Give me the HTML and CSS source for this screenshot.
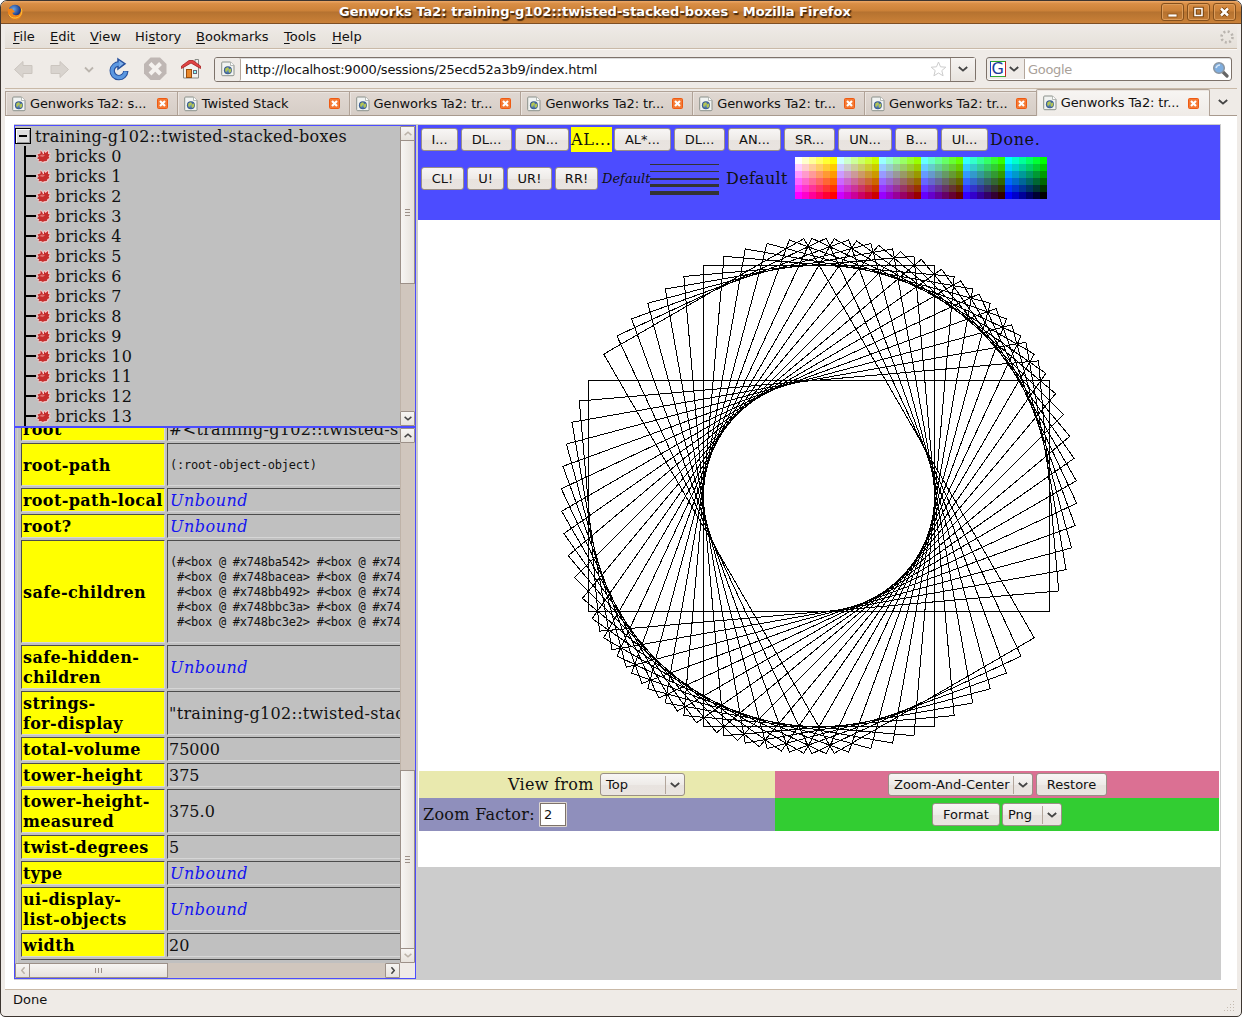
FILE: index.html
```
<!DOCTYPE html>
<html lang="en">
<head>
<meta charset="utf-8">
<title>Genworks Ta2: training-g102::twisted-stacked-boxes - Mozilla Firefox</title>
<link rel="stylesheet" href="styles.css">
</head>
<body>
<svg class="defs" aria-hidden="true">
  <defs>
    <linearGradient id="gBlue" x1="0" y1="0" x2="0" y2="1"><stop offset="0" stop-color="#7fb0ea"/><stop offset="1" stop-color="#3f7cd4"/></linearGradient>
    <radialGradient id="gGlobe"><stop offset="0" stop-color="#6a9ccc"/><stop offset="1" stop-color="#35568c"/></radialGradient>
    <radialGradient id="gFox" cx=".4" cy=".3"><stop offset="0" stop-color="#6aa6e8"/><stop offset="1" stop-color="#16307c"/></radialGradient>
    <symbol id="page" viewBox="0 0 14 16">
      <path d="M1.700 1h7.800L13 4.500v9.200q0 1-1 1H1.700q-1 0-1-1V2q0-1 1-1z" fill="#f1f3f1" stroke="#8b908b"/>
      <path d="M9.500 1v3.500H13" fill="#fff" stroke="#a5aaa5" stroke-width=".8"/>
      <circle cx="6.900" cy="9.300" r="4" fill="url(#gGlobe)"/>
      <path d="M4.300 7.500l2-1.300 1.700.8-.6 1.700-1.600 1.300-.6 1.600-1-1.600zM7.600 8.500l2.400-1 .4 2.400-1.500 2-1.300-1z" fill="#b4c552"/>
    </symbol>
    <symbol id="close" viewBox="0 0 11 11">
      <rect x=".5" y=".5" width="10" height="10" rx="1" fill="#f47a35" stroke="#ee5a12"/>
      <path d="M3 3l5 5M8 3l-5 5" stroke="#fff" stroke-width="2.200"/>
    </symbol>
    <symbol id="chev" viewBox="0 0 10 6"><path d="M.8 1L5 4.600 9.200 1" fill="none" stroke="currentColor" stroke-width="1.900"/></symbol>
    <symbol id="leaf" viewBox="0 0 15 15">
      <path d="M1 5l3-.5V1l2 1 1 2.500L8.500 1l1.500 2 2.500-2v3l2 .5-1 2.500 1 2-2 1.500-1 2-2.500.3-1 1.200-2.500-1.300-3 .3.700-2L.5 9.500 2 7.500z" fill="#f3cfcf" stroke="#eec9c9" stroke-width=".9"/>
      <path d="M1.500 5.500L4.500 4.500V1.500L6 3l1 2h1V2.300L9.500 4l2.500-2v3l1.700.3L12.500 7.500l1 1.500-2 1-.8 2-2.700.2-1 .8-2-1-2.500.3.700-2L1 9.300 2.800 7.500z" fill="#c52c2c"/>
      <path d="M3 7l3-1.500 3 .4L7 8z" fill="#e07070"/>
    </symbol>
    <rect id="brick" x="-230.500" y="-115.500" width="461" height="231"/>
  </defs>
</svg>

<div class="window">
  <header class="titlebar">
    <svg class="fox" width="16" height="16" viewBox="0 0 16 16">
      <circle cx="8" cy="8" r="7.200" fill="url(#gFox)"/>
      <path d="M1.200 3.500Q.2 7 .9 9.600C2 13.600 5 15.700 8.400 15.600c4.400-.1 7.200-3.700 7.100-7.600 0-3-1.300-4.800-2.700-5.900 1.300 2.400 1.300 4 .8 5.700-.8 3-3.500 4.100-5.800 3.300-1.700-.6-2.400-1.700-2.200-2.700 1 .4 2 0 2.700-.6-1.400-.5-1.700-1-1.700-1.800L5 4.700c-1-.4-1.700-.2-2.300.2z" fill="#f08419"/>
      <path d="M14.300 4.500c1.600 4.500-1 9-5.800 9.500-3 .3-5.400-1-6.500-3.500" fill="none" stroke="#fbc53c" stroke-width="1"/>
    </svg>
    <h1>Genworks Ta2: training-g102::twisted-stacked-boxes - Mozilla Firefox</h1>
    <div class="winbtns">
      <span><svg width="22" height="16" viewBox="0 0 22 16"><rect x="6" y="10" width="9" height="3" fill="#fff" stroke="#8b4f14" stroke-width=".8"/></svg></span>
      <span><svg width="22" height="16" viewBox="0 0 22 16"><path d="M7 4.500h7v7H7z" fill="none" stroke="#7a430c" stroke-width="3.600"/><path d="M7 4.500h7v7H7z" fill="none" stroke="#fff" stroke-width="1.500"/></svg></span>
      <span><svg width="22" height="16" viewBox="0 0 22 16"><path d="M7 4.500l7 7M14 4.500l-7 7" stroke="#7a430c" stroke-width="4.500"/><path d="M7 4.500l7 7M14 4.500l-7 7" stroke="#fff" stroke-width="2.500"/></svg></span>
    </div>
  </header>

  <nav class="menubar">
    <span class="m1"><u>F</u>ile</span><span class="m2"><u>E</u>dit</span><span class="m3"><u>V</u>iew</span><span class="m4">Hi<u>s</u>tory</span><span class="m5"><u>B</u>ookmarks</span><span class="m6"><u>T</u>ools</span><span class="m7"><u>H</u>elp</span>
    <svg class="throbber" width="14" height="14" viewBox="0 0 14 14"><circle cx="7" cy="7" r="5.500" fill="none" stroke="#b9b4ae" stroke-width="2.600" stroke-dasharray="2 2.320"/></svg>
  </nav>

  <div class="toolbar">
    <svg class="tools" width="206" height="38" viewBox="0 0 206 38">
      <g fill="#d8d3ce" stroke="#cbc5bf">
        <path d="M9.500 19.500l8.500-8v4h9v8h-9v4z"/>
        <path d="M63.500 19.500L55 11.500v4h-9v8h9v4z"/>
      </g>
      <path d="M80 17.500l4 4 4-4" fill="none" stroke="#bbb5ae" stroke-width="1.800"/>
      <g fill="none">
        <path d="M114.500 14A6.800 6.800 0 1 0 120.800 21" stroke="#27509c" stroke-width="5.400"/>
        <path d="M113 9l7 4.700-7 5.300z" fill="#7fb0ea" stroke="#27509c" stroke-width="1.500"/>
        <path d="M114.500 14A6.800 6.800 0 1 0 120.600 21.500" stroke="#5b97e0" stroke-width="3.400"/>
      </g>
      <path d="M145.500 7.500h9.500l6.500 6.500v9.500l-6.500 6.500h-9.500l-6.500-6.500V14z" fill="#bfb7b4"/>
      <path d="M145 13.500l10.500 10.500M155.500 13.500L145 24" stroke="#f4f1ee" stroke-width="4"/>
      <path d="M178.500 17v11h15V17L186 12z" fill="#f2f1ee" stroke="#888a85"/>
      <path d="M190 14V9.500h3.500V16" fill="#eee" stroke="#888a85"/>
      <path d="M176.500 18.500l9.500-5.500 9.500 5.500v-2.500L188 10.500h-4l-7.500 5.500z" fill="#e04444" stroke="#a81f1f" stroke-width=".8"/>
      <rect x="181.500" y="19.500" width="5" height="8" fill="#e9882b" stroke="#9b4d0c"/>
      <rect x="188.500" y="20.500" width="3" height="3" fill="#8ff" stroke="#667"/>
    </svg>
    <div class="urlbar">
      <div class="favbox"><svg width="14" height="16"><use href="#page"/></svg></div>
      <span class="url">http://localhost:9000/sessions/25ecd52a3b9/index.html</span>
      <svg class="star" width="17" height="16" viewBox="0 0 17 16"><path d="M8.500 1l2 4.800 5.300.4-4 3.400 1.300 5.200-4.600-2.800-4.600 2.800 1.300-5.200-4-3.400 5.300-.4z" fill="#fff" stroke="#ccc"/></svg>
      <div class="drop"><svg width="10" height="6"><use href="#chev"/></svg></div>
    </div>
    <div class="search">
      <div class="engine">
        <span class="glogo">G</span>
        <svg width="10" height="6"><use href="#chev"/></svg>
      </div>
      <span class="hint">Google</span>
      <svg class="glass" width="17" height="17" viewBox="0 0 17 17"><path d="M10.500 10.500l4.500 4.500" stroke="#666" stroke-width="3.200" stroke-linecap="round"/><circle cx="7" cy="7" r="5.300" fill="#7faee0" stroke="#8b95a0" stroke-width="1.500"/><path d="M4 7q1-3 4-3" stroke="#d4e6f8" stroke-width="1.500" fill="none"/></svg>
    </div>
  </div>

  <div class="tabs">
    <div class="tab"><svg class="fav" width="14" height="16"><use href="#page"/></svg><span>Genworks Ta2: s...</span><svg class="x" width="11" height="11"><use href="#close"/></svg></div>
    <div class="tab"><svg class="fav" width="14" height="16"><use href="#page"/></svg><span>Twisted Stack</span><svg class="x" width="11" height="11"><use href="#close"/></svg></div>
    <div class="tab"><svg class="fav" width="14" height="16"><use href="#page"/></svg><span>Genworks Ta2: tr...</span><svg class="x" width="11" height="11"><use href="#close"/></svg></div>
    <div class="tab"><svg class="fav" width="14" height="16"><use href="#page"/></svg><span>Genworks Ta2: tr...</span><svg class="x" width="11" height="11"><use href="#close"/></svg></div>
    <div class="tab"><svg class="fav" width="14" height="16"><use href="#page"/></svg><span>Genworks Ta2: tr...</span><svg class="x" width="11" height="11"><use href="#close"/></svg></div>
    <div class="tab"><svg class="fav" width="14" height="16"><use href="#page"/></svg><span>Genworks Ta2: tr...</span><svg class="x" width="11" height="11"><use href="#close"/></svg></div>
    <div class="tab active"><svg class="fav" width="14" height="16"><use href="#page"/></svg><span>Genworks Ta2: tr...</span><svg class="x" width="11" height="11"><use href="#close"/></svg></div>
    <div class="tablist"><svg width="10" height="6"><use href="#chev"/></svg></div>
  </div>

  <main class="page">
    <div class="frames">
      <div class="left">
        <section class="treepane">
          <div class="tree">
            <div class="root"><span class="minus"></span><span class="name">training-g102::twisted-stacked-boxes</span></div>
            <ul>
              <li><svg width="15" height="15"><use href="#leaf"/></svg>bricks 0</li>
              <li><svg width="15" height="15"><use href="#leaf"/></svg>bricks 1</li>
              <li><svg width="15" height="15"><use href="#leaf"/></svg>bricks 2</li>
              <li><svg width="15" height="15"><use href="#leaf"/></svg>bricks 3</li>
              <li><svg width="15" height="15"><use href="#leaf"/></svg>bricks 4</li>
              <li><svg width="15" height="15"><use href="#leaf"/></svg>bricks 5</li>
              <li><svg width="15" height="15"><use href="#leaf"/></svg>bricks 6</li>
              <li><svg width="15" height="15"><use href="#leaf"/></svg>bricks 7</li>
              <li><svg width="15" height="15"><use href="#leaf"/></svg>bricks 8</li>
              <li><svg width="15" height="15"><use href="#leaf"/></svg>bricks 9</li>
              <li><svg width="15" height="15"><use href="#leaf"/></svg>bricks 10</li>
              <li><svg width="15" height="15"><use href="#leaf"/></svg>bricks 11</li>
              <li><svg width="15" height="15"><use href="#leaf"/></svg>bricks 12</li>
              <li><svg width="15" height="15"><use href="#leaf"/></svg>bricks 13</li>
            </ul>
          </div>
          <div class="vbar">
            <div class="sb off"><svg class="up" width="8" height="5"><use href="#chev"/></svg></div>
            <div class="thumb t1"><i></i></div>
            <div class="track"></div>
            <div class="sb"><svg width="8" height="5"><use href="#chev"/></svg></div>
          </div>
        </section>
        <section class="inspector">
          <div class="clip">
            <div class="slots">
              <b>root</b><div>#&lt;training-g102::twisted-stacked-boxes&gt;</div>
              <b>root-path</b><div><pre>(:root-object-object)</pre></div>
              <b>root-path-local</b><div><em>Unbound</em></div>
              <b>root?</b><div><em>Unbound</em></div>
              <b>safe-children</b><div><pre>(#&lt;box @ #x748ba542&gt; #&lt;box @ #x748ba8ea&gt;
 #&lt;box @ #x748bacea&gt; #&lt;box @ #x748bb092&gt;
 #&lt;box @ #x748bb492&gt; #&lt;box @ #x748bb83a&gt;
 #&lt;box @ #x748bbc3a&gt; #&lt;box @ #x748bbfe2&gt;
 #&lt;box @ #x748bc3e2&gt; #&lt;box @ #x748bc78a&gt;</pre></div>
              <b>safe-hidden-<br>children</b><div><em>Unbound</em></div>
              <b>strings-<br>for-display</b><div>"training-g102::twisted-stacked-boxes"</div>
              <b>total-volume</b><div class="num">75000</div>
              <b>tower-height</b><div class="num">375</div>
              <b>tower-height-<br>measured</b><div class="num">375.0</div>
              <b>twist-degrees</b><div class="num">5</div>
              <b>type</b><div><em>Unbound</em></div>
              <b>ui-display-<br>list-objects</b><div><em>Unbound</em></div>
              <b>width</b><div class="num">20</div>
            </div>
          </div>
          <div class="vbar">
            <div class="sb"><svg class="up" width="8" height="5"><use href="#chev"/></svg></div>
            <div class="track"></div>
            <div class="thumb t2"><i></i></div>
            <div class="sb off"><svg width="8" height="5"><use href="#chev"/></svg></div>
          </div>
          <div class="hbar">
            <div class="sb off"><svg class="lt" width="8" height="5"><use href="#chev"/></svg></div>
            <div class="thumb t3"><i></i></div>
            <div class="track"></div>
            <div class="sb"><svg class="rt" width="8" height="5"><use href="#chev"/></svg></div>
          </div>
          <div class="corner"></div>
        </section>
      </div>

      <section class="right">
        <div class="actions">
          <div class="row r1">
            <button style="width:37px">I...</button><button style="width:51px">DL...</button><button style="width:54px">DN...</button><mark>AL...</mark><button style="width:57px">AL*...</button><button style="width:51px">DL...</button><button style="width:53px">AN...</button><button style="width:51px">SR...</button><button style="width:54px">UN...</button><button style="width:43px">B...</button><button style="width:47px">UI...</button><span class="done">Done.</span>
          </div>
          <div class="row r2">
            <button style="width:43px">CL!</button><button style="width:37px">U!</button><button style="width:45px">UR!</button><button style="width:43px">RR!</button>
            <em class="dflt">Default</em>
            <div class="weights"><i></i><i></i><i></i><i></i><i></i></div>
            <span class="dflt2">Default</span>
            <div class="palette"></div>
          </div>
        </div>
        <div class="view">
          <svg width="802" height="551" viewBox="418 220 802 551" shape-rendering="crispEdges">
            <g transform="translate(819 496)" fill="none" stroke="#000" stroke-width="1">
              <use href="#brick"/>
              <use href="#brick" transform="rotate(-5)"/>
              <use href="#brick" transform="rotate(-10)"/>
              <use href="#brick" transform="rotate(-15)"/>
              <use href="#brick" transform="rotate(-20)"/>
              <use href="#brick" transform="rotate(-25)"/>
              <use href="#brick" transform="rotate(-30)"/>
              <use href="#brick" transform="rotate(-35)"/>
              <use href="#brick" transform="rotate(-40)"/>
              <use href="#brick" transform="rotate(-45)"/>
              <use href="#brick" transform="rotate(-50)"/>
              <use href="#brick" transform="rotate(-55)"/>
              <use href="#brick" transform="rotate(-60)"/>
              <use href="#brick" transform="rotate(-65)"/>
              <use href="#brick" transform="rotate(-70)"/>
              <use href="#brick" transform="rotate(-75)"/>
              <use href="#brick" transform="rotate(-80)"/>
              <use href="#brick" transform="rotate(-85)"/>
              <use href="#brick" transform="rotate(-90)"/>
              <use href="#brick" transform="rotate(-95)"/>
              <use href="#brick" transform="rotate(-100)"/>
              <use href="#brick" transform="rotate(-105)"/>
              <use href="#brick" transform="rotate(-110)"/>
              <use href="#brick" transform="rotate(-115)"/>
              <use href="#brick" transform="rotate(-120)"/>
            </g>
          </svg>
          <div class="controls">
            <div class="c1"><span>View from</span><div class="select s1"><span>Top</span><i><svg width="10" height="6"><use href="#chev"/></svg></i></div></div>
            <div class="c2"><div class="select s2"><span>Zoom-And-Center</span><i><svg width="10" height="6"><use href="#chev"/></svg></i></div><button style="width:71px">Restore</button></div>
            <div class="c3"><span>Zoom Factor:</span><div class="field">2</div></div>
            <div class="c4"><button style="width:68px">Format</button><div class="select s3"><span>Png</span><i><svg width="10" height="6"><use href="#chev"/></svg></i></div></div>
          </div>
        </div>
      </section>
    </div>
  </main>

  <footer class="status"><span>Done</span>
    <svg width="11" height="11" viewBox="0 0 11 11" fill="#c4bab0"><path d="M9 0h1v1H9zM6 3h1v1H6zM9 3h1v1H9zM3 6h1v1H3zM6 6h1v1H6zM9 6h1v1H9zM0 9h1v1H0zM3 9h1v1H3zM6 9h1v1H6zM9 9h1v1H9z"/></svg>
  </footer>
</div>
</body>
</html>
```
FILE: styles.css
```
* { box-sizing: border-box; }
body { margin: 0; width: 1242px; height: 1017px; overflow: hidden; background: #fff; font: 13px/16px "DejaVu Sans", sans-serif; color: #1a1a1a; }
.defs { position: absolute; width: 0; height: 0; }
svg { display: block; flex: none; }
u { text-underline-offset: 2px; text-decoration-thickness: 1px; text-decoration-skip-ink: none; }

.window { width: 1242px; height: 1017px; display: flex; flex-direction: column; border: 1px solid #3c3530; border-radius: 7px 7px 5px 5px; background: #efebe7; overflow: hidden; padding: 0 4px; }

/* title bar */
.titlebar { height: 23px; margin: 0 -4px; flex: none; display: flex; align-items: center; border-bottom: 1px solid #7e4f24; background: linear-gradient(#eca868 0, #d98e45 12%, #cb8138 45%, #b57230 50%, #c67e36 90%, #c98139 100%); padding: 0 5px; }
.titlebar .fox { margin-left: 1px; }
.titlebar h1 { margin: 0 0 0 316px; font: bold 13px/20px "DejaVu Sans", sans-serif; letter-spacing: .03px; white-space: nowrap; color: #fff; text-shadow: 1px 1px 1px #4a2a0c, 1px 2px 1px #4a2a0c; }
.winbtns { display: flex; gap: 3px; margin-left: auto; }
.winbtns span { width: 23px; height: 18px; border: 1px solid #85501c; border-radius: 3px; box-shadow: inset 0 0 0 1px #dd9d5b; overflow: hidden; }

/* menu bar */
.menubar { height: 25px; flex: none; display: flex; align-items: center; border-bottom: 1px solid #c9b9a7; background: linear-gradient(#efebe7, #e5e0d9); color: #111; }
.menubar span { padding: 2px 0 0 8px; }
.menubar .m1 { width: 37px; } .menubar .m2 { width: 40px; } .menubar .m3 { width: 45px; } .menubar .m4 { width: 61px; } .menubar .m5 { width: 88px; } .menubar .m6 { width: 48px; }
.throbber { margin: 1px 3px 0 auto; }

/* navigation bar */
.toolbar { height: 40px; flex: none; display: flex; align-items: center; border-top: 1px solid #faf8f6; border-bottom: 1px solid #c9b9a7; background: #efebe7; }
.urlbar { display: flex; align-items: center; margin-left: 3px; width: 762px; height: 25px; border: 1px solid #7d726a; border-radius: 3px; background: #fff; color: #111; box-shadow: inset 0 1px #ddd; }
.favbox { width: 26px; height: 23px; display: flex; align-items: center; justify-content: center; background: #efebe7; border-right: 1px solid #b3a69b; border-radius: 2px; }
.url { padding: 1px 0 0 4px; letter-spacing: -.19px; }
.star { margin-left: auto; margin-right: 3px; }
.drop { width: 25px; height: 23px; display: flex; align-items: center; justify-content: center; border-left: 1px solid #9c9088; background: linear-gradient(#f6f4f2, #e8e3de); color: #444; }
.search { display: flex; align-items: center; margin-left: 10px; width: 246px; height: 24px; border: 1px solid #7d726a; border-radius: 3px; background: #fff; box-shadow: inset 0 1px #ddd; }
.engine { display: flex; align-items: center; gap: 3px; width: 38px; height: 20px; padding-left: 3px; border-right: 1px solid #b3a69b; background: #efebe7; color: #444; }
.glogo { width: 16px; height: 16px; border: 1px solid; border-color: #2aa52a #c22 #3a3 #14c; background: #fff; color: #1a3a9c; font: 16px/14px "DejaVu Sans", sans-serif; text-align: center; text-indent: -.5px; }
.hint { padding: 1px 0 0 3px; letter-spacing: -.3px; color: #a9a199; }
.glass { margin-left: auto; margin-right: 2px; }

/* tabs */
.tabs { height: 27px; flex: none; display: flex; align-items: flex-end; border-bottom: 1px solid #a89a8e; background: #efebe7; }
.tab { width: 171.800px; height: 24px; display: flex; align-items: center; padding: 0 9px 0 6px; background: linear-gradient(#e0d8d2, #d6cdc6); border-top: 1px solid #b0a297; border-left: 1px solid #b0a297; box-shadow: inset 1px 1px #ebe5e0; color: #111; white-space: nowrap; flex: none; letter-spacing: -.12px; }
.tab span { margin-left: 4px; }
.tab .x { margin-left: auto; }
.tab.active { width: 174px; height: 27px; margin-bottom: -1px; background: linear-gradient(#f7f5f3, #efebe7); border-right: 1px solid #b0a297; border-radius: 2px 2px 0 0; padding-right: 10px; padding-bottom: 0; }
.tablist { flex: 1; height: 26px; display: flex; align-items: center; justify-content: center; color: #444; }

/* page */
.page { height: 873px; flex: none; background: #fff; padding: 8px 16px 0 9px; border-right: 1px solid #fff; }
.frames { width: 1207px; height: 856px; display: flex; background: #ccc; padding: 1px 1px 1px 0; gap: 2px; font: 16px/20px "DejaVu Serif", serif; letter-spacing: .3px; color: #111; }
.left { width: 402px; display: flex; flex-direction: column; }
.treepane { height: 302px; flex: none; display: flex; border: 1px solid #4c4cff; background: #c0c0c0; overflow: hidden; }
.tree { width: 385px; flex: none; overflow: hidden; }
.root { height: 20px; display: flex; align-items: center; white-space: nowrap; }
.root .name { padding-top: 2px; }
.minus { width: 16px; height: 16px; margin-right: 4px; border: 1px solid #000; background: linear-gradient(#000, #000) center / 8px 2px no-repeat #ddd; box-shadow: inset 1px 1px #fff, inset -1px -1px #999; }
.tree ul { margin: 0 0 0 9px; padding: 0; list-style: none; border-left: 2px solid #000; }
.tree li { height: 20px; display: flex; align-items: center; padding-top: 2px; letter-spacing: .2px; background: linear-gradient(#000, #000) 0 center / 10px 2px no-repeat; }
.tree li svg { margin: -2px 4px 0 10px; }

.inspector { flex: 1; display: grid; grid-template: 1fr 15px / 385px 15px; border: 1px solid #4c4cff; background: #c0c0c0; overflow: hidden; }
.clip { overflow: hidden; border-left: 1px solid #ccc; margin-left: 2px; }
.slots { width: 600px; margin: -11px 0 0 3px; display: grid; grid-template-columns: 144px 450px; grid-template-rows: 24px 43px 24px 24px 103px 44px 44px 24px 24px 44px 24px 24px 44px 24px; gap: 2px; border-bottom: 1px solid #4c4c4c; padding-bottom: 2px; }
.slots > * { border: 1px solid; border-color: #4c4c4c #d6d6d6 #d6d6d6 #4c4c4c; padding: 2px 1px 0; display: grid; align-content: center; white-space: nowrap; }
.slots b { background: #ff0; color: #000; letter-spacing: .38px; }
.slots em { color: #1414f0; letter-spacing: .5px; padding-left: 1px; }
.slots .num { letter-spacing: 0; }
pre { margin: 0; font: 12px/15px "DejaVu Sans Mono", monospace; letter-spacing: -.24px; padding-left: 1px; }

/* scroll bars */
.vbar { width: 15px; display: flex; flex-direction: column; background: #d0c6bd; }
.hbar { height: 15px; display: flex; background: #d0c6bd; }
.sb { width: 15px; height: 15px; flex: none; display: flex; align-items: center; justify-content: center; border: 1px solid #9c9088; border-radius: 1px; background: linear-gradient(#f7f5f3, #e7e2dc); color: #444; }
.sb.off { color: #bbb2a8; }
.up { transform: rotate(180deg); } .lt { transform: rotate(90deg); } .rt { transform: rotate(-90deg); }
.track { flex: 1; }
.vbar .track { border-left: 1px solid #bfb3a8; }
.thumb { flex: none; border: 1px solid #9c9088; display: flex; align-items: center; justify-content: center; background: linear-gradient(90deg, #f7f5f3, #e7e2dc); }
.thumb i { width: 5px; height: 7px; background: repeating-linear-gradient(#9c9088 0 1px, transparent 1px 3px); }
.t1 { height: 144px; margin-top: -1px; } .t2 { height: 179px; margin-bottom: -1px; }
.t3 { width: 139px; margin-left: -1px; background: linear-gradient(#f7f5f3, #e7e2dc); }
.t3 i { width: 7px; height: 5px; background: repeating-linear-gradient(90deg, #9c9088 0 1px, transparent 1px 3px); }
.corner { background: #efebe7; }

/* drawing frame */
.right { width: 802px; display: flex; flex-direction: column; }
.actions { height: 95px; background: #4c4cff; padding: 2px 0 0 3px; }
.row { display: flex; align-items: center; white-space: nowrap; }
.r1 { height: 25px; } .r2 { height: 42px; margin-top: 5px; }
button { height: 23px; flex: none; margin: 0; padding: 0; border: 1px solid #9a8f86; border-radius: 3px; background: linear-gradient(#f8f6f5, #eeebe8 50%, #e8e3df 55%, #e9e4e0); font: 13px/19px "DejaVu Sans", sans-serif; letter-spacing: 0; color: #111; }
.r1 button, .r2 button { margin-right: 3px; }
mark { background: #ff0; height: 25px; width: 41px; margin: 0 2px 0 -1px; line-height: 25px; letter-spacing: .6px; color: #111; }
.done { margin-left: -1px; letter-spacing: .6px; }
.dflt { font-size: 13px; letter-spacing: 0; margin-left: 1px; width: 48px; padding-top: 2px; }
.weights { width: 69px; height: 42px; display: flex; flex-direction: column; padding-top: 7px; }
.weights i { background: #333; height: 1px; margin-bottom: 6px; }
.weights i:nth-child(3) { height: 2px; margin-bottom: 4px; }
.weights i:nth-child(4) { height: 3px; margin-bottom: 4px; }
.weights i:nth-child(5) { height: 4px; margin-bottom: 0; }
.dflt2 { margin-left: 7px; width: 69px; padding-top: 2px; }
.palette { width: 252px; height: 42px; background-blend-mode: screen; background-image:
  linear-gradient(90deg, #f00 42px, #c00 42px 84px, #900 84px 126px, #600 126px 168px, #300 168px 210px, #000 210px),
  linear-gradient(#0f0 7px, #0c0 7px 14px, #090 14px 21px, #060 21px 28px, #030 28px 35px, #000 35px),
  repeating-linear-gradient(90deg, #00f 0 7px, #00c 7px 14px, #009 14px 21px, #006 21px 28px, #003 28px 35px, #000 35px 42px); }
.view { height: 647px; background: #fff; }
.controls { margin: 0 1px; display: grid; grid-template: 27px 33px / 356px 444px; }
.controls > div { display: flex; align-items: center; }
.c1 { background: #e9e9ae; padding-left: 89px; }
.c1 > span { width: 92px; }
.c2 { background: #db7093; padding-left: 113px; gap: 3px; }
.c3 { background: #8f8fbc; padding-left: 4px; }
.c3 > span { width: 116px; }
.c4 { background: #32cd32; padding-left: 157px; gap: 2px; }
.select { height: 23px; display: flex; align-items: center; border: 1px solid #9a8f86; border-radius: 3px; background: linear-gradient(#f8f6f5, #eeebe8 50%, #e8e3df 55%, #e9e4e0); font: 13px/19px "DejaVu Sans", sans-serif; letter-spacing: 0; color: #111; padding-left: 5px; }
.select i { margin-left: auto; width: 19px; height: 18px; border-left: 1px solid #b3a69b; display: flex; align-items: center; justify-content: center; color: #444; }
.s1 { width: 85px; } .s2 { width: 145px; } .s3 { width: 60px; }
.field { width: 28px; height: 25px; border: 1px solid #ddd6d0; box-shadow: inset 0 0 0 1px #7d726a; background: #fff; border-radius: 1px; font: 13px/23px "DejaVu Sans", sans-serif; padding-left: 4px; }

/* status bar */
.status { flex: 1; display: flex; justify-content: space-between; border-top: 1px solid #c9b9a7; padding: 1px 2px 0 8px; color: #111; }
.status span { line-height: 18px; }
.status svg { align-self: flex-end; margin-bottom: 4px; }
```
